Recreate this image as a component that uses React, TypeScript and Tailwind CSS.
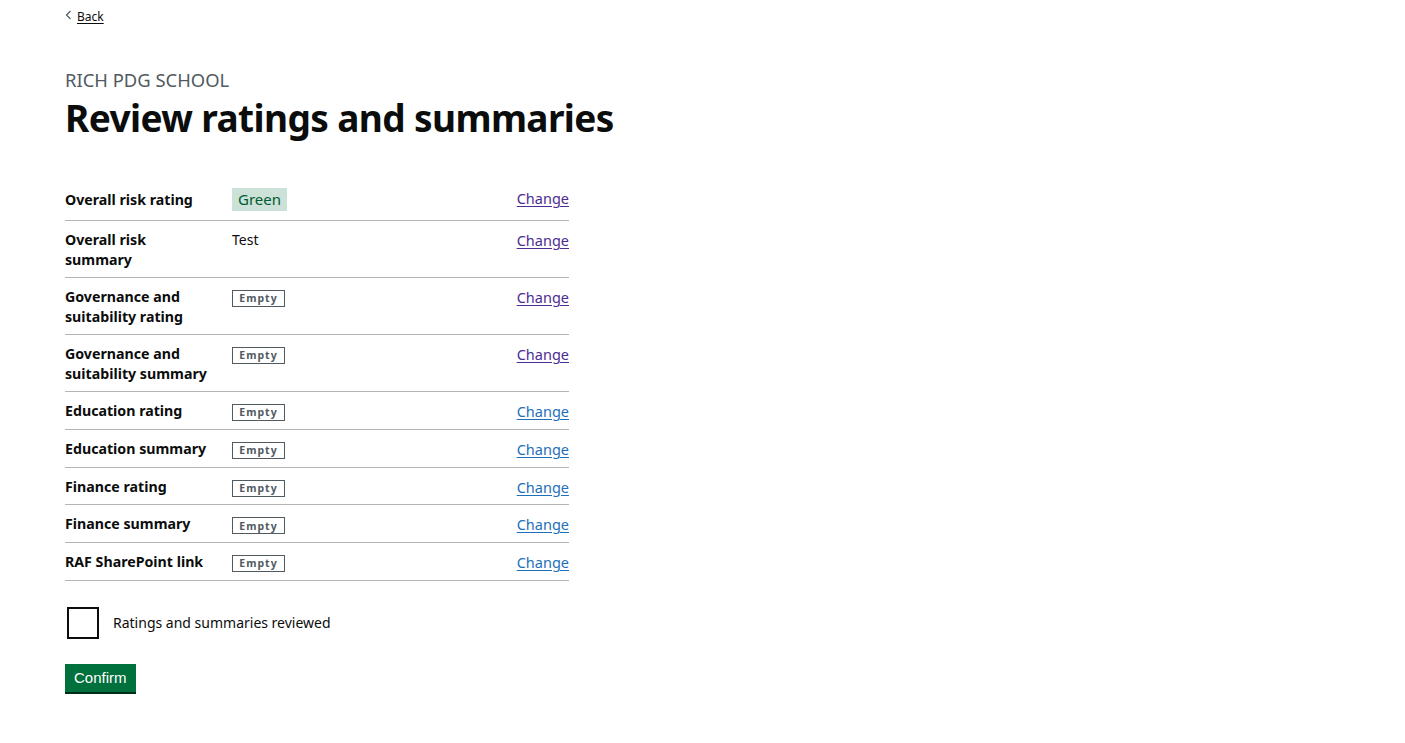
import React from "react";

const rows: { key: string[]; value: "green" | "test" | "empty"; visited: boolean }[] = [
  { key: ["Overall risk rating"], value: "green", visited: true },
  { key: ["Overall risk", "summary"], value: "test", visited: true },
  { key: ["Governance and", "suitability rating"], value: "empty", visited: true },
  { key: ["Governance and", "suitability summary"], value: "empty", visited: true },
  { key: ["Education rating"], value: "empty", visited: false },
  { key: ["Education summary"], value: "empty", visited: false },
  { key: ["Finance rating"], value: "empty", visited: false },
  { key: ["Finance summary"], value: "empty", visited: false },
  { key: ["RAF SharePoint link"], value: "empty", visited: false },
];

export default function App() {
  return (
    <div
      className="min-h-[743px] bg-white text-[#0b0c0c] pl-[65px]"
      style={{ fontFamily: '"Noto Sans", "Open Sans", sans-serif' }}
    >
      <div className="pt-[2px]">
        <a href="#" className="inline-flex items-center text-[12px] leading-[18px] text-[#0b0c0c]">
          <svg width="7" height="10" viewBox="0 0 7 10" className="mr-[5px] -mt-[4px]">
            <path d="M5.5 1 L1.5 5 L5.5 9" fill="none" stroke="#505a5f" strokeWidth="1.2" />
          </svg>
          <span className="underline underline-offset-2">Back</span>
        </a>
      </div>

      <div className="mt-[42px] text-[18.4px] leading-[24px] text-[#505a5f]">RICH PDG SCHOOL</div>
      <h1 className="mt-[4px] text-[37px] leading-[44px] font-bold tracking-[-0.6px]">Review ratings and summaries</h1>

      <div className="mt-[39px] w-[504px]">
        {rows.map((r, i) => (
          <div
            key={i}
            className={`flex border-b border-[#b1b4b6] ${
              i === 0 ? "pt-[11px] pb-[10px]" : r.key.length > 1 ? "pt-[9px] pb-[7px]" : "pt-[9px] pb-[7.5px]"
            }`}
          >
            <div className="w-[167px] text-[14.2px] leading-[20px] font-bold">
              {r.key.map((k, j) => (
                <div key={j}>{k}</div>
              ))}
            </div>
            <div className="flex-1 text-[14px] leading-[20px]">
              {r.value === "green" && (
                <span className="inline-block bg-[#cce2d8] text-[#005a30] text-[15px] leading-[23px] px-[6px] -mt-[2px] -mb-[3px] align-top">
                  Green
                </span>
              )}
              {r.value === "test" && <span>Test</span>}
              {r.value === "empty" && (
                <span className="inline-flex items-center justify-center mt-[3px] h-[17px] w-[53px] border border-[#505a5f] text-[10.5px] font-bold tracking-[1px] text-[#505a5f] leading-none">
                  Empty
                </span>
              )}
            </div>
            <div className={`text-[14.5px] leading-[20px] ${i === 0 ? "-mt-[2px]" : ""}`}>
              <a
                href="#"
                className={`underline underline-offset-2 ${r.visited ? "text-[#4c2c92]" : "text-[#1d70b8]"}`}
              >
                Change
              </a>
            </div>
          </div>
        ))}
      </div>

      <div className="mt-[26px] flex items-center">
        <div className="ml-[2px] w-[32px] h-[32px] border-2 border-[#0b0c0c] bg-white" />
        <span className="ml-[14px] text-[14px] leading-[20px]">Ratings and summaries reviewed</span>
      </div>

      <button
        className="mt-[25px] h-[28px] px-[9px] bg-[#00703c] text-white text-[15px] leading-[28px] shadow-[0_2px_0_#002d18]"
        style={{ fontFamily: '"Liberation Sans", Arial, sans-serif' }}
      >
        Confirm
      </button>
    </div>
  );
}
